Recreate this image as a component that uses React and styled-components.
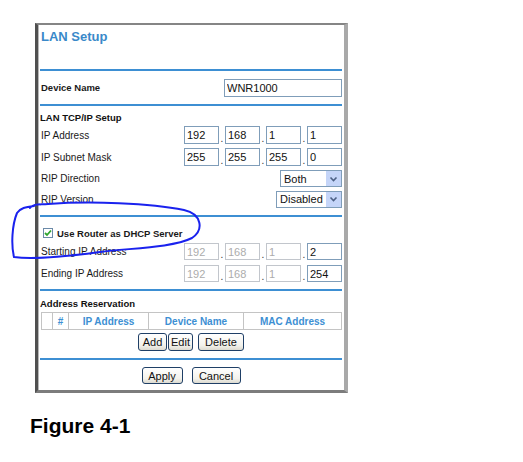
import React from "react";
import styled, { createGlobalStyle } from "styled-components";

const GlobalStyle = createGlobalStyle`
  body {
    margin: 0;
    background: #fff;
    font-family: "Liberation Sans", Arial, sans-serif;
  }
`;

const Page = styled.div`
  position: relative;
  width: 523px;
  height: 462px;
  padding-top: 23px;
  box-sizing: border-box;
`;

const Frame = styled.div`
  margin-left: 35px;
  width: 313px;
  box-sizing: border-box;
  border-left: 3px solid #505050;
  border-top: 2px solid #858585;
  border-right: 4px solid #a9a9a9;
  border-bottom: 3px solid #7c7c7c;
  box-shadow: inset 1px 0 0 #b8b8b8;
  padding: 0 2px 6px 2px;
  background: #fff;
`;

const Title = styled.div`
  height: 44px;
  padding-top: 4px;
  box-sizing: border-box;
  color: #3a89c9;
  font-size: 13px;
  font-weight: bold;
  line-height: 16px;
  padding-left: 1px;
`;

const Divider = styled.div`
  height: 2px;
  background: #3d8fd3;
  margin-top: ${({ $top }) => $top || 0}px;
`;

const Heading = styled.div`
  padding-top: ${({ $top }) => $top || 6}px;
  font-size: 9.5px;
  font-weight: bold;
  line-height: 12px;
  color: #111;
`;

const Row = styled.div`
  display: flex;
  align-items: center;
  justify-content: space-between;
  height: ${({ $h }) => $h}px;
`;

const Label = styled.span`
  font-size: ${({ $bold }) => ($bold ? 9.5 : 10)}px;
  color: #1a1a1a;
  font-weight: ${({ $bold }) => ($bold ? "bold" : "normal")};
  padding-left: 1px;
`;

const TextBox = styled.input`
  box-sizing: border-box;
  width: ${({ $w }) => $w || 35}px;
  height: ${({ $h }) => $h || 18}px;
  border: 1px solid ${({ disabled }) => (disabled ? "#c2c6cc" : "#7f9db9")};
  background: #fff;
  padding: 0 2px;
  margin: 0;
  font-family: "Liberation Sans", Arial, sans-serif;
  font-size: 11px;
  color: ${({ disabled }) => (disabled ? "#acacac" : "#111")};
  outline: none;
`;

const IpGroup = styled.div`
  display: flex;
  align-items: flex-end;
`;

const Dot = styled.span`
  width: 6px;
  text-align: center;
  font-size: 10px;
  line-height: 10px;
  color: #333;
`;

const Select = styled.div`
  box-sizing: border-box;
  width: ${({ $w }) => $w}px;
  height: 17px;
  border: 1px solid #7f9db9;
  display: flex;
  align-items: center;
  justify-content: space-between;
  padding-left: 3px;
  font-size: 11px;
  color: #111;
  background: #fff;
`;

const Arrow = styled.span`
  width: 15px;
  height: 15px;
  background: #c5d5f8;
  display: flex;
  align-items: center;
  justify-content: center;
`;

const CheckRow = styled.div`
  display: flex;
  align-items: center;
  gap: 3px;
  padding-top: 8px;
  height: 16px;
  padding-left: 3px;
`;

const CheckBox = styled.span`
  box-sizing: border-box;
  width: 10px;
  height: 10px;
  border: 1px solid #6b8aa8;
  background: #fff;
  display: flex;
  align-items: center;
  justify-content: center;
`;

const Table = styled.table`
  margin-top: 2px;
  margin-left: 1px;
  width: 301px;
  border-collapse: collapse;
  table-layout: fixed;
`;

const Th = styled.th`
  height: 16px;
  border: 1px solid #c4c4c4;
  padding: 0;
  font-size: 10px;
  font-weight: bold;
  color: #3d8fd3;
  text-align: center;
`;

const ButtonRow = styled.div`
  display: flex;
  justify-content: center;
  margin-top: ${({ $top }) => $top}px;
  gap: ${({ $gap }) => $gap}px;
`;

const Button = styled.button`
  box-sizing: border-box;
  width: ${({ $w }) => $w}px;
  height: ${({ $h }) => $h || 18}px;
  margin-left: ${({ $ml }) => $ml || 0}px;
  padding: 0;
  border: 1px solid #1f3f66;
  border-radius: 3px;
  background: linear-gradient(#ffffff, #f3f2ec 70%, #dcdad0);
  font-family: "Liberation Sans", Arial, sans-serif;
  font-size: 11px;
  color: #111;
`;

const Caption = styled.div`
  margin: 21px 0 0 30px;
  font-size: 21px;
  font-weight: bold;
  line-height: 24px;
  color: #000;
`;

const Scribble = styled.svg`
  position: absolute;
  left: 0;
  top: 0;
  pointer-events: none;
`;

function IpFields({ values, disabled, h }) {
  return (
    <IpGroup>
      {values.map((v, i) => (
        <React.Fragment key={i}>
          {i > 0 && <Dot>.</Dot>}
          <TextBox
            defaultValue={v}
            disabled={disabled && i < 3}
            $h={h}
          />
        </React.Fragment>
      ))}
    </IpGroup>
  );
}

function Dropdown({ value, width }) {
  return (
    <Select $w={width}>
      {value}
      <Arrow>
        <svg width="9" height="6" viewBox="0 0 9 6">
          <path d="M1.5 1.5 L4.5 4.5 L7.5 1.5" fill="none" stroke="#4d6185" strokeWidth="1.6" />
        </svg>
      </Arrow>
    </Select>
  );
}

export default function App() {
  return (
    <Page>
      <GlobalStyle />
      <Frame>
        <Title>LAN Setup</Title>
        <Divider />
        <Row $h={33}>
          <Label $bold>Device Name</Label>
          <TextBox defaultValue="WNR1000" $w={118} />
        </Row>
        <Divider />
        <Heading>LAN TCP/IP Setup</Heading>
        <Row $h={22}>
          <Label>IP Address</Label>
          <IpFields values={["192", "168", "1", "1"]} />
        </Row>
        <Row $h={22}>
          <Label>IP Subnet Mask</Label>
          <IpFields values={["255", "255", "255", "0"]} />
        </Row>
        <Row $h={21}>
          <Label>RIP Direction</Label>
          <Dropdown value="Both" width={62} />
        </Row>
        <Row $h={20}>
          <Label>RIP Version</Label>
          <Dropdown value="Disabled" width={66} />
        </Row>
        <Divider $top={6} />
        <CheckRow>
          <CheckBox>
            <svg width="8" height="8" viewBox="0 0 8 8">
              <path d="M1 4 L3 6 L7 1.5" fill="none" stroke="#2fa52f" strokeWidth="1.8" />
            </svg>
          </CheckBox>
          <Label $bold>Use Router as DHCP Server</Label>
        </CheckRow>
        <Row $h={21}>
          <Label>Starting IP Address</Label>
          <IpFields values={["192", "168", "1", "2"]} disabled h={17} />
        </Row>
        <Row $h={23}>
          <Label>Ending IP Address</Label>
          <IpFields values={["192", "168", "1", "254"]} disabled h={17} />
        </Row>
        <Divider $top={4} />
        <Heading $top={7}>Address Reservation</Heading>
        <Table>
          <colgroup>
            <col style={{ width: 11 }} />
            <col style={{ width: 16 }} />
            <col style={{ width: 80 }} />
            <col style={{ width: 95 }} />
            <col />
          </colgroup>
          <thead>
            <tr>
              <Th></Th>
              <Th>#</Th>
              <Th>IP Address</Th>
              <Th>Device Name</Th>
              <Th>MAC Address</Th>
            </tr>
          </thead>
        </Table>
        <ButtonRow $top={3} $gap={1}>
          <Button $w={29}>Add</Button>
          <Button $w={25}>Edit</Button>
          <Button $w={46} $ml={4}>Delete</Button>
        </ButtonRow>
        <Divider $top={7} />
        <ButtonRow $top={7} $gap={9}>
          <Button $w={41} $h={17}>Apply</Button>
          <Button $w={49} $h={17}>Cancel</Button>
        </ButtonRow>
      </Frame>
      <Caption>Figure 4-1</Caption>
      <Scribble width="523" height="462" viewBox="0 0 523 462">
        <path
          d="M30 208 C 34 203, 40 205, 48 204 C 90 201, 150 203, 184 210 C 202 214, 204 230, 192 238 C 172 248, 130 248, 100 252 C 70 256, 35 260, 14 257 C 11 245, 12 225, 17 213 C 20 208, 26 207, 34 206"
          fill="none"
          stroke="#1a22ee"
          strokeWidth="2"
          strokeLinecap="round"
        />
      </Scribble>
    </Page>
  );
}
